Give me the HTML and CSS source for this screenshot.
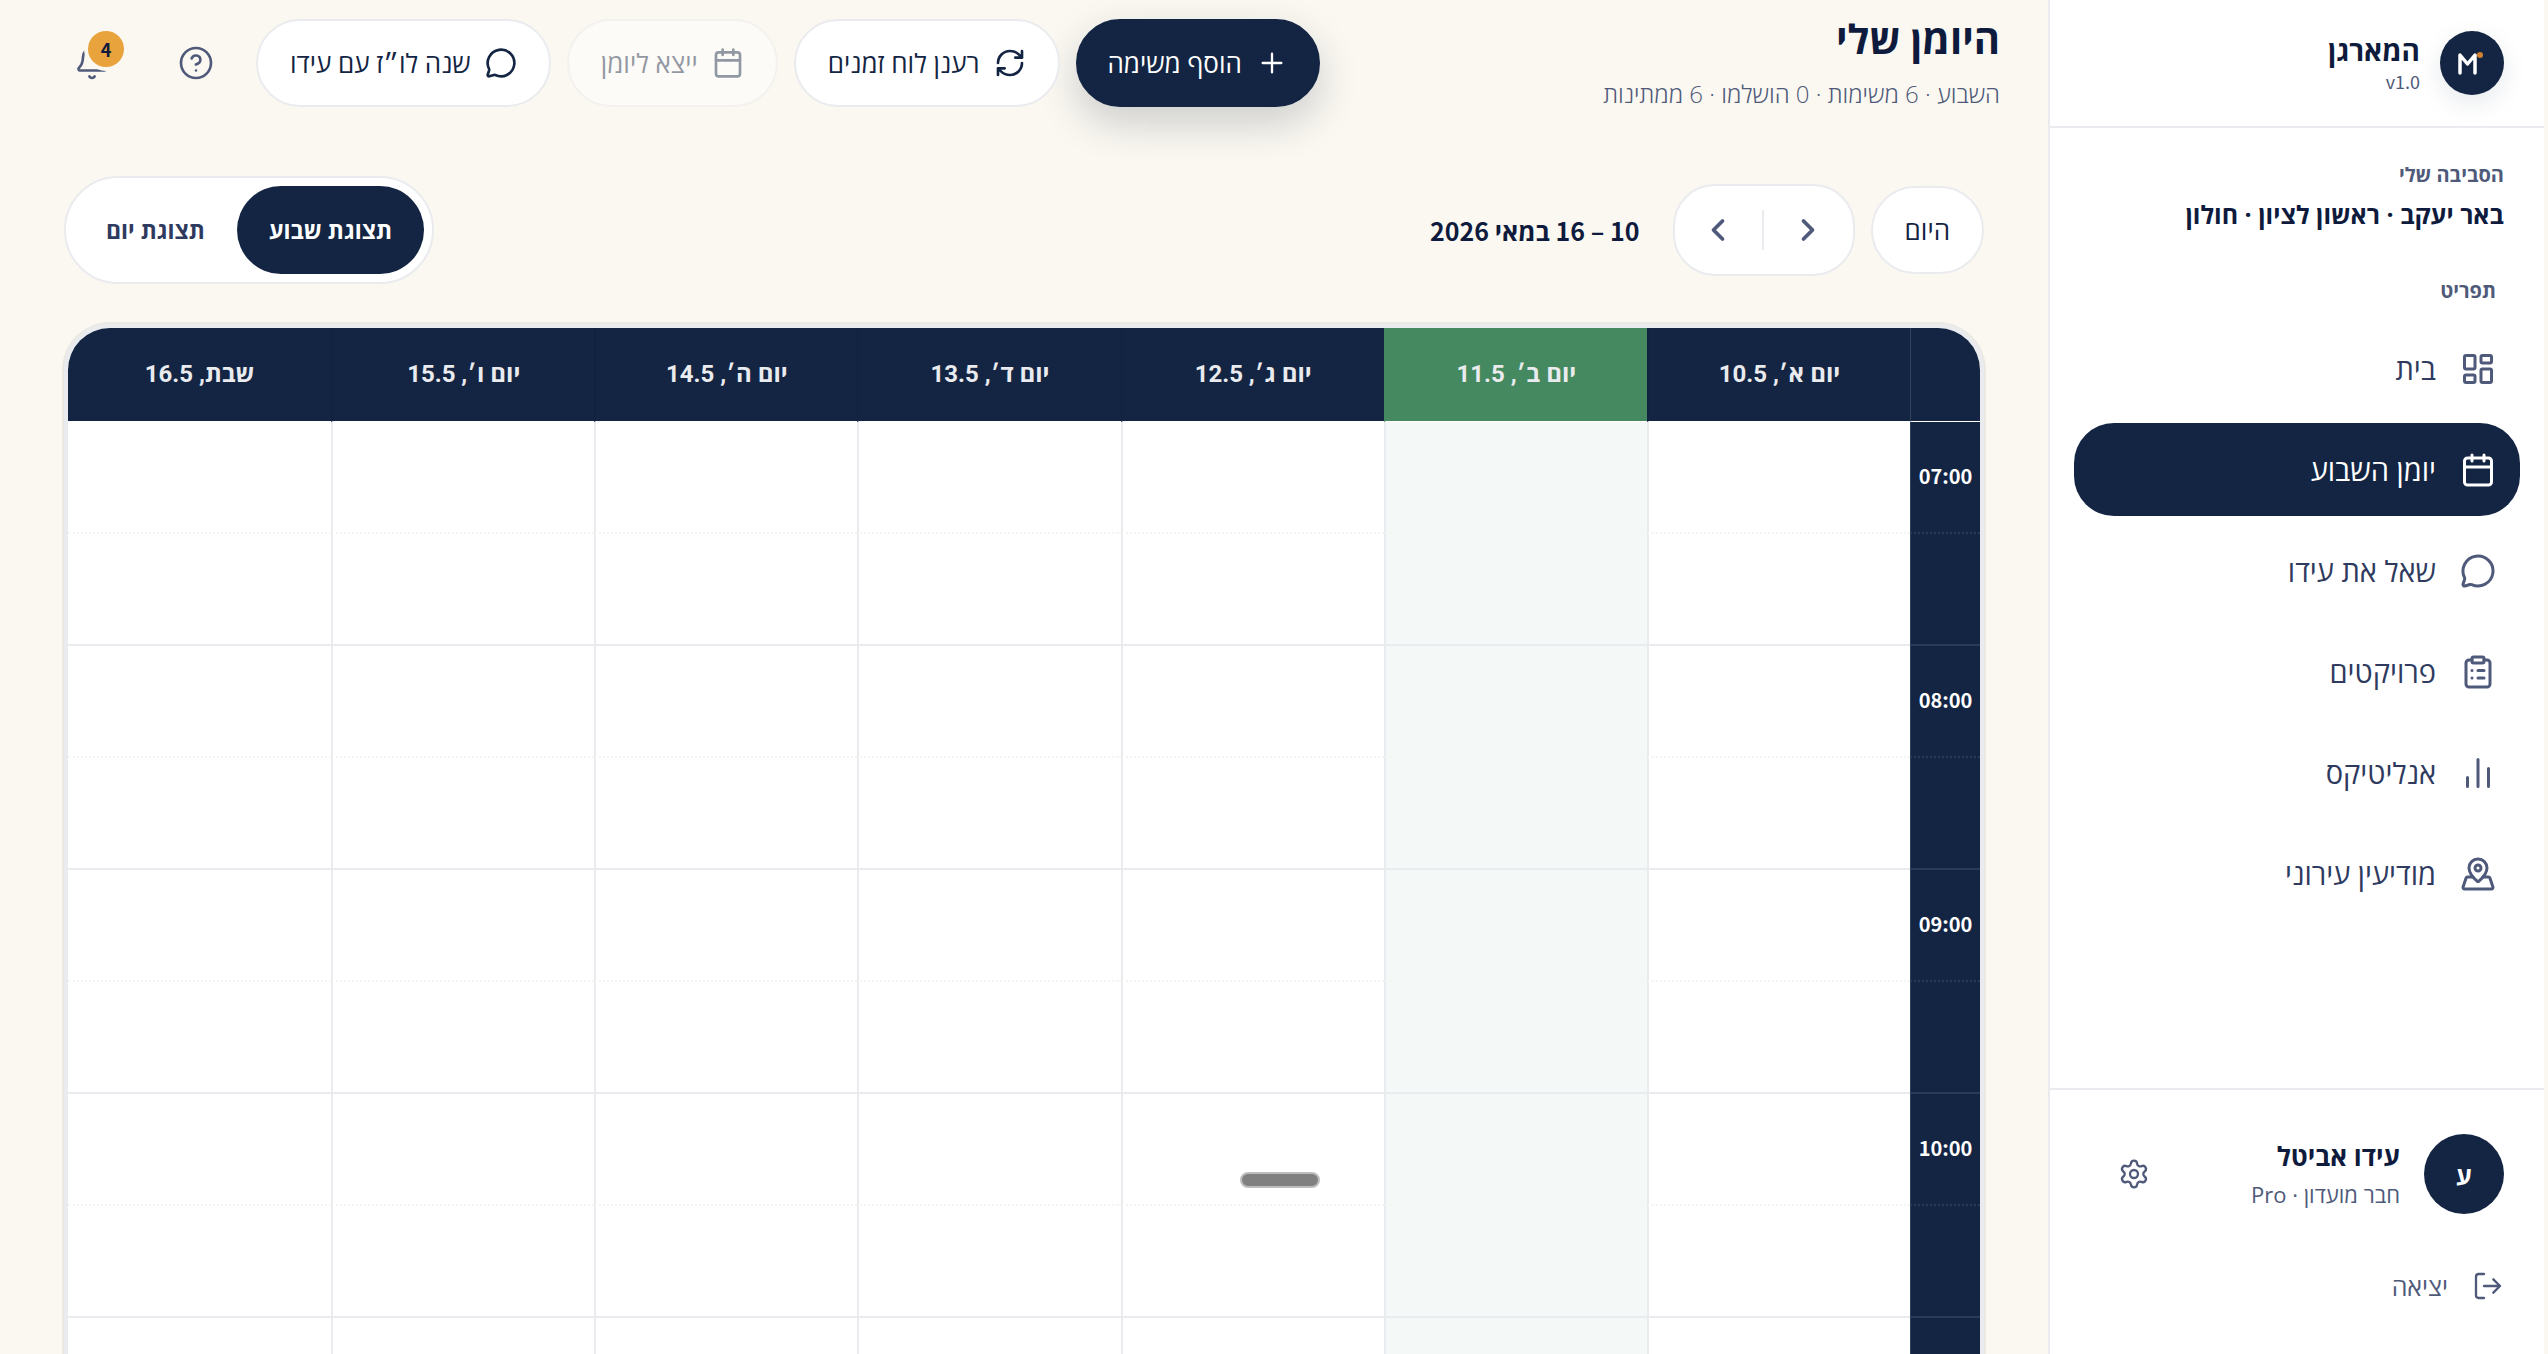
FILE: index.html
```html
<!DOCTYPE html>
<html lang="he" dir="rtl">
<head>
<meta charset="utf-8">
<title>היומן שלי</title>
<link rel="stylesheet" href="styles.css">
</head>
<body>
<svg class="sprite" aria-hidden="true">
  <symbol id="i-home" viewBox="0 0 24 24"><rect x="3" y="3" width="7" height="9" rx="1"/><rect x="14" y="3" width="7" height="5" rx="1"/><rect x="14" y="12" width="7" height="9" rx="1"/><rect x="3" y="16" width="7" height="5" rx="1"/></symbol>
  <symbol id="i-calendar" viewBox="0 0 24 24"><path d="M8 2v4M16 2v4M3 10h18"/><rect x="3" y="4" width="18" height="18" rx="2"/></symbol>
  <symbol id="i-bubble" viewBox="0 0 24 24"><path d="M2.992 16.342a2 2 0 0 1 .094 1.167l-1.065 3.29a1 1 0 0 0 1.236 1.168l3.413-.998a2 2 0 0 1 1.099.092 10 10 0 1 0-4.777-4.719"/></symbol>
  <symbol id="i-clipboard" viewBox="0 0 24 24"><rect x="8" y="2" width="8" height="4" rx="1"/><path d="M16 4h2a2 2 0 0 1 2 2v14a2 2 0 0 1-2 2H6a2 2 0 0 1-2-2V6a2 2 0 0 1 2-2h2M12 11h4M12 16h4M8 11h.01M8 16h.01"/></symbol>
  <symbol id="i-bars" viewBox="0 0 24 24"><path d="M19 21V9M12 21V3M5 21v-6"/></symbol>
  <symbol id="i-pin" viewBox="0 0 24 24"><path d="M18 8c0 3.613-3.869 7.429-5.393 8.795a1 1 0 0 1-1.214 0C9.870 15.429 6 11.613 6 8a6 6 0 0 1 12 0"/><circle cx="12" cy="8" r="2"/><path d="M8.714 14h-3.710a1 1 0 0 0-.948.683l-2.004 6A1 1 0 0 0 3 22h18a1 1 0 0 0 .948-1.316l-2-6a1 1 0 0 0-.949-.684h-3.712"/></symbol>
  <symbol id="i-gear" viewBox="0 0 24 24"><path d="M9.671 4.136a2.340 2.340 0 0 1 4.659 0 2.340 2.340 0 0 0 3.319 1.915 2.340 2.340 0 0 1 2.330 4.033 2.340 2.340 0 0 0 0 3.831 2.340 2.340 0 0 1-2.330 4.033 2.340 2.340 0 0 0-3.319 1.915 2.340 2.340 0 0 1-4.659 0 2.340 2.340 0 0 0-3.320-1.915 2.340 2.340 0 0 1-2.330-4.033 2.340 2.340 0 0 0 0-3.831A2.340 2.340 0 0 1 6.350 6.051a2.340 2.340 0 0 0 3.319-1.915"/><circle cx="12" cy="12" r="3"/></symbol>
  <symbol id="i-logout" viewBox="0 0 24 24"><path d="M16 17l5-5-5-5M21 12H9M9 21H5a2 2 0 0 1-2-2V5a2 2 0 0 1 2-2h4"/></symbol>
  <symbol id="i-plus" viewBox="0 0 24 24"><path d="M5 12h14M12 5v14"/></symbol>
  <symbol id="i-refresh" viewBox="0 0 24 24"><path d="M3 12a9 9 0 0 1 9-9 9.750 9.750 0 0 1 6.740 2.740L21 8M21 3v5h-5M21 12a9 9 0 0 1-9 9 9.750 9.750 0 0 1-6.740-2.740L3 16M8 16H3v5"/></symbol>
  <symbol id="i-help" viewBox="0 0 24 24"><circle cx="12" cy="12" r="10"/><path d="M9.090 9a3 3 0 0 1 5.830 1c0 2-3 3-3 3M12 17h.01"/></symbol>
  <symbol id="i-bell" viewBox="0 0 24 24"><path d="M10.268 21a2 2 0 0 0 3.464 0M3.262 15.326A1 1 0 0 0 4 17h16a1 1 0 0 0 .740-1.673C19.410 13.956 18 12.499 18 8A6 6 0 0 0 6 8c0 4.499-1.411 5.956-2.738 7.326"/></symbol>
  <symbol id="i-right" viewBox="0 0 24 24"><path d="M9 18l6-6-6-6"/></symbol>
  <symbol id="i-left" viewBox="0 0 24 24"><path d="M15 18l-6-6 6-6"/></symbol>
</svg>
<div class="shell">
  <aside class="sidebar">
    <div class="brand">
      <span class="logo"><svg viewBox="0 0 64 64"><path d="M20 42V24l7.500 9 7.500-9v18"/><circle cx="40" cy="24" r="3"/></svg></span>
      <div><div class="brand-name">המארגן</div><div class="version" dir="ltr">v1.0</div></div>
    </div>
    <div class="region">
      <div class="label">הסביבה שלי</div>
      <div class="places">באר יעקב · ראשון לציון · חולון</div>
    </div>
    <nav class="nav">
      <div class="label menu-label">תפריט</div>
      <a class="item" href="#"><svg class="icon"><use href="#i-home"/></svg>בית</a>
      <a class="item active" href="#" aria-current="page"><svg class="icon"><use href="#i-calendar"/></svg>יומן השבוע</a>
      <a class="item" href="#"><svg class="icon"><use href="#i-bubble"/></svg>שאל את עידו</a>
      <a class="item" href="#"><svg class="icon"><use href="#i-clipboard"/></svg>פרויקטים</a>
      <a class="item" href="#"><svg class="icon"><use href="#i-bars"/></svg>אנליטיקס</a>
      <a class="item" href="#"><svg class="icon"><use href="#i-pin"/></svg>מודיעין עירוני</a>
    </nav>
    <div class="account">
      <div class="user">
        <span class="avatar">ע</span>
        <div class="who"><div class="user-name">עידו אביטל</div><div class="plan">חבר מועדון · Pro</div></div>
        <button class="gear" aria-label="הגדרות"><svg class="icon small"><use href="#i-gear"/></svg></button>
      </div>
      <button class="logout"><svg class="icon small"><use href="#i-logout"/></svg>יציאה</button>
    </div>
  </aside>
  <main class="main">
    <header class="top">
      <div>
        <h1>היומן שלי</h1>
        <p class="summary">השבוע · 6 משימות · 0 הושלמו · 6 ממתינות</p>
      </div>
      <div class="actions">
        <button class="btn primary"><svg class="icon small"><use href="#i-plus"/></svg>הוסף משימה</button>
        <button class="btn"><svg class="icon small bold"><use href="#i-refresh"/></svg>רענן לוח זמנים</button>
        <button class="btn" disabled><svg class="icon small bold"><use href="#i-calendar"/></svg>ייצא ליומן</button>
        <button class="btn"><svg class="icon small bold"><use href="#i-bubble"/></svg>שנה לו״ז עם עידו</button>
        <button class="round" aria-label="עזרה"><svg class="icon"><use href="#i-help"/></svg></button>
        <button class="round" aria-label="התראות"><svg class="icon"><use href="#i-bell"/></svg><span class="badge">4</span></button>
      </div>
    </header>
    <div class="toolbar">
      <div class="range">
        <button class="btn today">היום</button>
        <div class="pager">
          <button aria-label="השבוע הקודם"><svg class="icon heavy"><use href="#i-right"/></svg></button>
          <button aria-label="השבוע הבא"><svg class="icon heavy"><use href="#i-left"/></svg></button>
        </div>
        <strong class="dates">10 – 16 במאי 2026</strong>
      </div>
      <div class="views">
        <button class="view on" aria-pressed="true">תצוגת שבוע</button>
        <button class="view" aria-pressed="false">תצוגת יום</button>
      </div>
    </div>
    <div class="card">
      <table class="week">
        <thead>
          <tr><td class="hour"></td><th>יום א׳, 10.5</th><th class="now">יום ב׳, 11.5</th><th>יום ג׳, 12.5</th><th>יום ד׳, 13.5</th><th>יום ה׳, 14.5</th><th>יום ו׳, 15.5</th><th>שבת, 16.5</th></tr>
        </thead>
        <tbody>
          <tr class="half"><th class="hour">07:00</th><td></td><td class="now"></td><td></td><td></td><td></td><td></td><td></td></tr>
          <tr><td class="hour"></td><td></td><td class="now"></td><td></td><td></td><td></td><td></td><td></td></tr>
          <tr class="half"><th class="hour">08:00</th><td></td><td class="now"></td><td></td><td></td><td></td><td></td><td></td></tr>
          <tr><td class="hour"></td><td></td><td class="now"></td><td></td><td></td><td></td><td></td><td></td></tr>
          <tr class="half"><th class="hour">09:00</th><td></td><td class="now"></td><td></td><td></td><td></td><td></td><td></td></tr>
          <tr><td class="hour"></td><td></td><td class="now"></td><td></td><td></td><td></td><td></td><td></td></tr>
          <tr class="half"><th class="hour">10:00</th><td></td><td class="now"></td><td></td><td></td><td></td><td></td><td></td></tr>
          <tr><td class="hour"></td><td></td><td class="now"></td><td></td><td></td><td></td><td></td><td></td></tr>
          <tr class="half"><td class="hour"></td><td></td><td class="now"></td><td></td><td></td><td></td><td></td><td></td></tr>
        </tbody>
      </table>
    </div>
  </main>
</div>
<div class="handle"></div>
</body>
</html>
```
FILE: styles.css
```css
:root {
  --navy: #132543;
  --ink: #0f1b3d;
  --text: #2f3a5f;
  --muted: #4f5a7a;
  --line: #eaebee;
  --cream: #fbf8f1;
  --sans: "Noto Sans CJK JP", "Open Sans", sans-serif;
  --hebrew: "Open Sans", sans-serif;
  --display: Roboto, "Open Sans", sans-serif;
}
* { box-sizing: border-box; }
body { margin: 0; background: var(--cream); color: var(--ink); font-family: var(--sans); }
button { font: inherit; color: inherit; background: none; border: 0; padding: 0; display: flex; align-items: center; justify-content: center; }
.sprite { display: none; }
.icon { width: 36px; height: 36px; flex: none; fill: none; stroke: currentColor; stroke-width: 1.75; stroke-linecap: round; stroke-linejoin: round; }
.icon.small { width: 32px; height: 32px; }
.icon.bold { stroke-width: 2; }
.icon.heavy { stroke-width: 2.5; }

.shell { display: flex; height: 100vh; overflow: hidden; padding-right: 4px; }
.sidebar { width: 496px; flex: none; display: flex; flex-direction: column; background: #fff; border-left: 2px solid var(--line); }
.brand { display: flex; align-items: center; gap: 20px; height: 128px; padding: 0 40px; border-bottom: 2px solid var(--line); }
.logo { width: 64px; height: 64px; border-radius: 50%; background: var(--navy); box-shadow: 0 8px 24px rgba(19, 37, 67, .1); }
.logo svg { display: block; fill: none; stroke: #fff; stroke-width: 3.5; stroke-linecap: round; stroke-linejoin: round; }
.logo circle { fill: #d08030; stroke: none; }
.brand-name { font-size: 28px; line-height: 36px; font-weight: 700; }
.version { font-size: 18px; line-height: 28px; color: var(--muted); text-align: right; }
.region { padding: 32px 40px 0; }
.label { font-family: var(--hebrew); font-size: 20px; line-height: 30px; font-weight: 700; color: var(--muted); }
.places { font-family: var(--hebrew); font-size: 25px; line-height: 40px; padding-top: 4px; font-weight: 700; }
.nav { flex: 1; display: flex; flex-direction: column; gap: 8px; padding: 42px 24px 0; }
.menu-label { padding: 0 24px; margin-bottom: 8px; }
.item { display: flex; align-items: center; gap: 24px; height: 93px; padding: 0 24px; border-radius: 40px; font-family: var(--hebrew); font-size: 29px; font-weight: 500; color: var(--text); text-decoration: none; }
.item .icon { color: var(--muted); stroke-width: 2; }
.item.active, .item.active .icon { background: var(--navy); color: #fff; }
.account { padding: 44px 40px; border-top: 2px solid var(--line); height: 266px; display: flex; flex-direction: column; gap: 40px; }
.user { display: flex; align-items: center; gap: 24px; }
.avatar { width: 80px; height: 80px; border-radius: 50%; background: var(--navy); color: #fff; display: grid; place-items: center; font-size: 25px; font-weight: 700; }
.who { flex: 1; font-family: var(--hebrew); }
.user-name { font-size: 26px; line-height: 40px; font-weight: 700; }
.plan { font-size: 22px; line-height: 36px; color: var(--muted); }
.gear { width: 88px; height: 80px; color: var(--muted); }
.logout { justify-content: flex-start; gap: 24px; font-family: var(--hebrew); font-size: 25px; line-height: 64px; font-weight: 500; color: var(--muted); }

.main { flex: 1; min-width: 0; padding: 12px 48px 0; }
.top { display: flex; justify-content: space-between; align-items: flex-start; height: 164px; }
h1 { margin: 0; font-family: var(--display); font-size: 40px; line-height: 58px; font-weight: 700; }
.summary { margin: 6px 0 0; font-family: var(--hebrew); font-size: 24px; line-height: 36px; font-weight: 300; color: var(--muted); }
.actions { display: flex; gap: 16px; padding-top: 7px; }
.btn { height: 88px; padding: 0 32px; gap: 14px; border-radius: 44px; border: 2px solid var(--line); background: #fff; color: var(--navy); font-family: var(--hebrew); font-size: 26px; font-weight: 500; white-space: nowrap; }
.btn.primary { padding: 0 30px; background: var(--navy); border-color: var(--navy); color: #fff; box-shadow: 0 16px 40px rgba(19, 37, 67, .2); }
.btn:disabled { opacity: .45; }
.round { width: 88px; height: 88px; color: var(--muted); position: relative; }
.badge { position: absolute; top: 12px; right: 12px; width: 36px; height: 36px; border-radius: 50%; background: #e8a33d; box-shadow: 0 0 0 4px var(--cream); color: var(--ink); display: grid; place-items: center; font-size: 18px; font-weight: 700; }

.toolbar { display: flex; justify-content: space-between; align-items: center; height: 108px; padding: 0 16px; }
.range { display: flex; align-items: center; gap: 16px; }
.pager { display: flex; height: 92px; border: 2px solid var(--line); border-radius: 42px; background: #fff; align-items: center; color: var(--muted); }
.pager button { width: 89px; height: 40px; }
.pager button + button { border-right: 2px solid var(--line); }
.dates { font-size: 25px; font-weight: 700; padding-right: 17px; }
.views { display: flex; height: 108px; padding: 8px; border: 2px solid var(--line); border-radius: 54px; background: #fff; }
.view { height: 88px; padding: 0 32px; border-radius: 44px; font-family: var(--hebrew); font-size: 23px; font-weight: 700; color: var(--text); }
.view.on { background: var(--navy); color: #fff; }

.card { margin: 40px 16px 0; border: 4px solid var(--line); border-radius: 46px; box-shadow: 0 0 0 2px #eae9e4; background: #fff; overflow: hidden; }
.week { width: 100%; border-collapse: separate; border-spacing: 0; table-layout: fixed; }
.week tr > * { height: 112px; padding: 0 0 4px; border-left: 2px solid var(--line); border-bottom: 2px solid var(--line); }
.week tr > :last-child { border-left: 0; }
.week thead tr > * { height: 94px; border-left-color: #122240; border-bottom: 1px solid #fff; background: var(--navy); color: #e9ebee; font-family: var(--display); font-size: 24px; font-weight: 700; }
.week .half > * { border-bottom: 2px dotted #f4f4f5; }
.week .now { background: #f4f9f8; }
.week thead .now { background: #44895f; border-color: #44895f #44895f #fff; }
.week .hour, .week thead .hour { width: 70px; background: var(--navy); border-left: 1px solid #33425c; border-bottom-color: #2b3a56; color: #fff; font-size: 20px; font-weight: 700; }
.week thead .hour { border-bottom-color: #fff; }

.handle { position: fixed; left: 1240px; bottom: 166px; width: 80px; height: 16px; border: 2px solid #bebebe; border-radius: 8px; background: #808080; }
```
